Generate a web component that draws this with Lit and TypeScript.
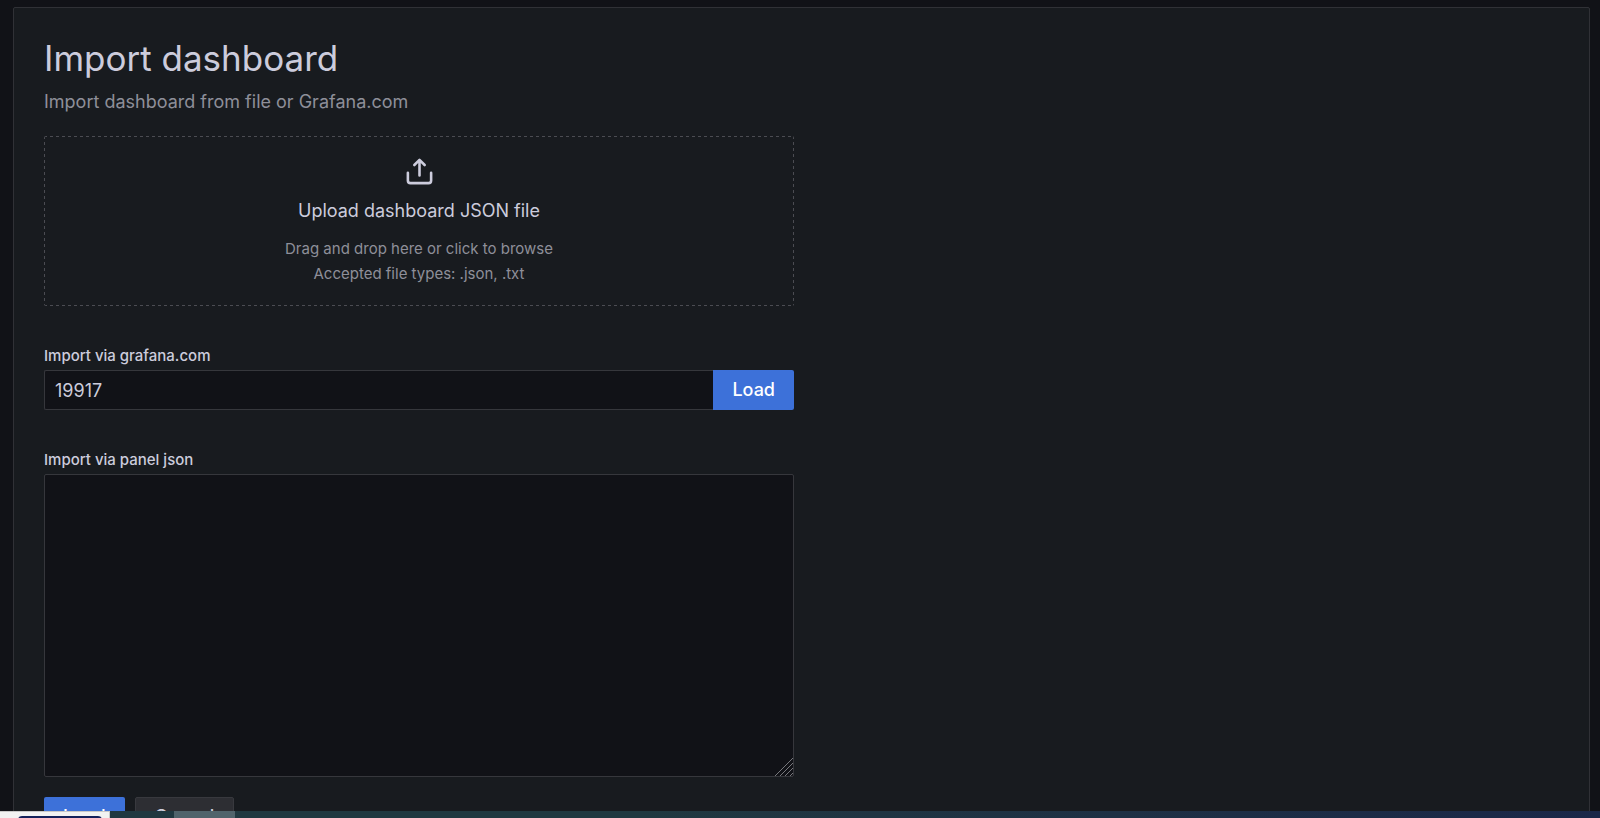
import { LitElement, html, css, svg } from "lit";
import { customElement, state } from "lit/decorators.js";

const uploadIcon = svg`
  <path d="M8.71,7.71,11,5.41V15a1,1,0,0,0,2,0V5.41l2.29,2.3a1,1,0,0,0,1.42,0,1,1,0,0,0,0-1.42l-4-4a1,1,0,0,0-.33-.21,1,1,0,0,0-.76,0,1,1,0,0,0-.33.21l-4,4A1,1,0,1,0,8.71,7.71ZM21,12a1,1,0,0,0-1,1v6a1,1,0,0,1-1,1H5a1,1,0,0,1-1-1V13a1,1,0,0,0-2,0v6a3,3,0,0,0,3,3H19a3,3,0,0,0,3-3V13A1,1,0,0,0,21,12Z"/>
`;

@customElement("app-root")
export class AppRoot extends LitElement {
  @state() private dashboardId = "19917";

  static styles = css`
    :host {
      display: flex;
      flex-direction: column;
      height: 100vh;
      background: #111217;
      color: #ccccdc;
      font-family: Inter, "Liberation Sans", sans-serif;
      font-size: 18px;
      line-height: 28px;
    }
    * { box-sizing: border-box; }
    button, input, textarea { font: inherit; color: inherit; margin: 0; }
    .viewport { flex: 1; min-height: 0; overflow: hidden; padding: 7px 10px 0 13px; }
    .page {
      min-height: 100%;
      padding: 29px 30px;
      background: #181b1f;
      border: 1px solid #303136;
      border-radius: 2px;
    }
    h1 { margin: 0; font-size: 35px; line-height: 42px; font-weight: 400; }
    .subtitle { margin: 9px 0 20px; color: #8e8f99; }
    .form { width: 50%; min-width: 300px; max-width: 750px; }
    .dropzone {
      --dash: #4b4c52 0 3px, transparent 3px 6px;
      display: flex;
      flex-direction: column;
      align-items: center;
      width: 100%;
      padding: 20px;
      background:
        repeating-linear-gradient(90deg, var(--dash)) top / 100% 1px no-repeat,
        repeating-linear-gradient(90deg, var(--dash)) bottom / 100% 1px no-repeat,
        repeating-linear-gradient(180deg, var(--dash)) left / 1px 100% no-repeat,
        repeating-linear-gradient(180deg, var(--dash)) right / 1px 100% no-repeat;
      border: 0;
      border-radius: 2px;
      text-align: center;
    }
    .icon { display: block; width: 31px; height: 31px; fill: currentColor; }
    .title { margin: 10px 0 11px; }
    .hint { color: #8e8f99; font-size: 15px; line-height: 25px; }
    .field { display: flex; flex-direction: column; margin-top: 40px; }
    .field label { font-size: 15px; line-height: 20px; font-weight: 500; padding-bottom: 4px; }
    .group { display: flex; }
    .input {
      flex: 1;
      min-width: 0;
      height: 40px;
      padding: 0 10px;
      background: #111217;
      border: 1px solid #36373c;
      border-right: 0;
      border-radius: 2px 0 0 2px;
      outline: none;
    }
    .area { position: relative; }
    .textarea {
      display: block;
      width: 100%;
      height: 303px;
      padding: 8px 10px;
      background: #111217;
      border: 1px solid #36373c;
      border-radius: 2px;
      resize: vertical;
      outline: none;
    }
    .textarea::-webkit-resizer { display: none; }
    .grip {
      position: absolute;
      right: 1px;
      bottom: 1px;
      width: 18px;
      height: 18px;
      fill: none;
      stroke: #77787c;
      pointer-events: none;
    }
    .btn {
      height: 40px;
      padding: 0 19px;
      border: 0;
      border-radius: 2px;
      font-weight: 500;
      line-height: 40px;
    }
    .primary { background: #3d71d9; color: #fff; }
    .secondary { background: #2d2e33; border: 1px solid #38393e; line-height: 38px; }
    .attached { border-radius: 0 2px 2px 0; }
    .actions { display: flex; gap: 10px; margin-top: 20px; }
    .taskbar {
      display: flex;
      flex: none;
      height: 7px;
      background: linear-gradient(90deg, #203840, #203840 40%, #1e3044 70%, #1a2748);
    }
    .preview {
      width: 110px;
      padding: 4px 7px 0 18px;
      background: #f2f2f2;
      border-top: 1px solid #c8c8c8;
      border-right: 1px solid #c8c8c8;
      overflow: hidden;
    }
    .pill { height: 20px; border-radius: 4px; background: #14205a; }
    .active { width: 61px; margin-left: 64px; background: #50636b; }
  `;

  render() {
    return html`
      <div class="viewport">
        <main class="page">
          <h1>Import dashboard</h1>
          <div class="subtitle">Import dashboard from file or Grafana.com</div>
          <form class="form" @submit=${(e: Event) => e.preventDefault()}>
            <button class="dropzone" type="button">
              <svg class="icon" viewBox="0 0 24 24" aria-hidden="true">${uploadIcon}</svg>
              <span class="title">Upload dashboard JSON file</span>
              <span class="hint">Drag and drop here or click to browse</span>
              <span class="hint">Accepted file types: .json, .txt</span>
            </button>
            <div class="field">
              <label for="gcom">Import via grafana.com</label>
              <div class="group">
                <input id="gcom" class="input" type="text" .value=${this.dashboardId}
                  @input=${(e: Event) => (this.dashboardId = (e.target as HTMLInputElement).value)} />
                <button class="btn primary attached" type="submit">Load</button>
              </div>
            </div>
            <div class="field">
              <label for="json">Import via panel json</label>
              <div class="area">
                <textarea id="json" class="textarea"></textarea>
                <svg class="grip" viewBox="0 0 18 18" aria-hidden="true">
                  <path d="M0,18L18,0M5,18L18,5M10,18L18,10M15,18L18,15"/>
                </svg>
              </div>
            </div>
            <div class="actions">
              <button class="btn primary" type="submit">Load</button>
              <button class="btn secondary" type="button">Cancel</button>
            </div>
          </form>
        </main>
      </div>
      <div class="taskbar">
        <div class="preview"><div class="pill"></div></div>
        <div class="active"></div>
      </div>
    `;
  }
}
